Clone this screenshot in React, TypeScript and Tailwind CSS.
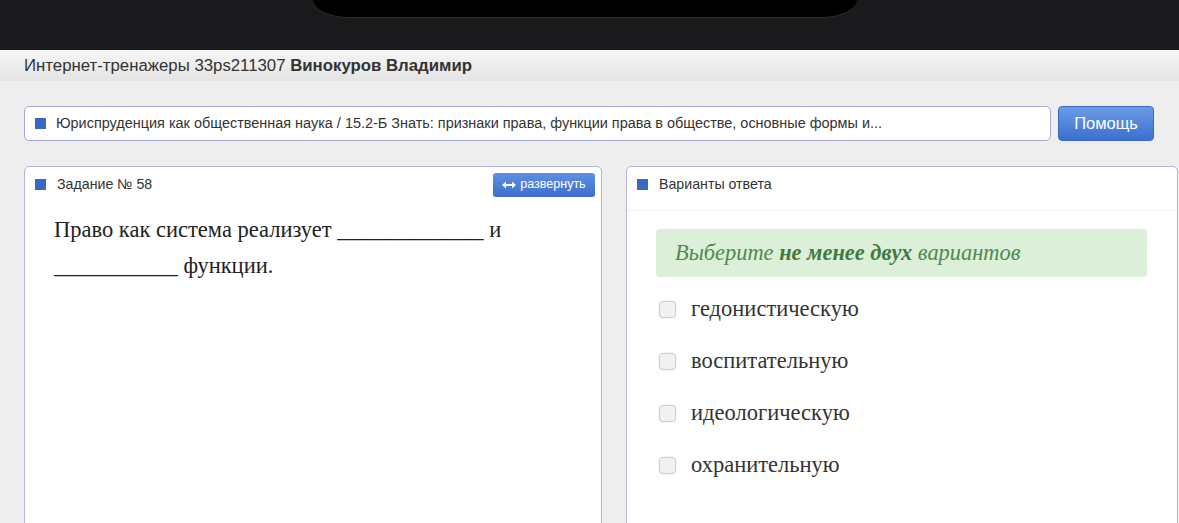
import React from "react";

const sans = { fontFamily: '"Liberation Sans", Arial, sans-serif' };
const serif = { fontFamily: '"Liberation Serif", "Times New Roman", serif' };

function Square() {
  return <span className="inline-block w-[11px] h-[11px] bg-[#3a68c2] shrink-0" />;
}

function Checkbox() {
  return (
    <span className="inline-block w-[17px] h-[17px] rounded-[4px] border border-[#cfcfcf] bg-[#f1f1f1] shadow-[0_0_2px_rgba(0,0,0,0.12)] shrink-0" />
  );
}

const options = ["гедонистическую", "воспитательную", "идеологическую", "охранительную"];

export default function App() {
  return (
    <div className="w-[1179px] h-[523px] overflow-hidden bg-[#eeeeee] text-[#333]" style={sans}>
      {/* top device bar */}
      <div className="h-[50px] bg-[#1a1a1c]">
        <div className="ml-[313px] w-[544px] h-[17px] bg-black rounded-bl-[36px_17px] rounded-br-[36px_17px] shadow-[0_1px_0_#2c2c2e]" />
      </div>

      {/* site header */}
      <div className="h-[31px] bg-gradient-to-b from-[#f6f6f6] to-[#e4e4e4] flex items-center pl-[24px] text-[16.8px] text-[#333]">
        <span>Интернет-тренажеры 33ps211307&nbsp;</span>
        <span className="font-bold">Винокуров Владимир</span>
      </div>

      <div className="pl-[24px] pt-[25px]">
        {/* breadcrumb row */}
        <div className="flex gap-[7px]">
          <div className="w-[1027px] h-[35px] shrink-0 bg-white border border-[#a8a8d2] rounded-[5px] flex items-center gap-[10px] pl-[10px] text-[14.45px] whitespace-nowrap overflow-hidden">
            <Square />
            <span>
              Юриспруденция как общественная наука / 15.2-Б Знать: признаки права, функции права в обществе, основные формы и...
            </span>
          </div>
          <button className="w-[96px] h-[35px] shrink-0 rounded-[4px] bg-gradient-to-b from-[#6b9be6] to-[#3d6fd0] border border-[#3a68c2] text-white text-[16.5px]">
            Помощь
          </button>
        </div>

        {/* panels */}
        <div className="flex gap-[24px] mt-[25px]">
          <div className="w-[578px] h-[400px] shrink-0 bg-white border border-[#b4b4dc] rounded-t-[5px]">
            <div className="flex items-center justify-between h-[32px] pl-[10px] pr-[6px] pt-[3px]">
              <div className="flex items-center gap-[11px] text-[14.2px]">
                <Square />
                <span>Задание № 58</span>
              </div>
              <button className="w-[102px] h-[24px] rounded-[3px] bg-gradient-to-b from-[#5f90e2] to-[#3c6dcf] text-white text-[12.5px] flex items-center justify-center gap-[4px]">
                <svg width="14" height="8" viewBox="0 0 14 8" fill="white">
                  <path d="M0 4 L4 0.5 V3 H10 V0.5 L14 4 L10 7.5 V5 H4 V7.5 Z" />
                </svg>
                <span>развернуть</span>
              </button>
            </div>
            <div className="pl-[29px] pr-[40px] pt-[13px] text-[22.5px] leading-[36px] text-[#222]" style={serif}>
              Право как система реализует _____________ и ___________ функции.
            </div>
          </div>

          <div className="w-[552px] h-[400px] shrink-0 bg-white border border-[#b4b4dc] rounded-t-[5px]">
            <div className="flex items-center gap-[11px] h-[32px] pl-[10px] pt-[3px] text-[14.2px]">
              <Square />
              <span>Варианты ответа</span>
            </div>
            <div className="h-[12px] border-b border-[#f2f2f2]" />
            <div className="pl-[29px] pt-[18px]" style={serif}>
              <div className="w-[491px] h-[48px] rounded-[4px] bg-[#dcefd8] flex items-center pl-[19px] text-[22.4px] italic text-[#4d8a4d]">
                Выберите&nbsp;<span className="font-bold text-[#3f7a3f]">не менее двух</span>&nbsp;вариантов
              </div>
              <div className="flex flex-col pt-[6px]">
                {options.map((o) => (
                  <label key={o} className="flex items-center gap-[15px] h-[52px] pl-[3px] text-[22.5px] text-[#333]">
                    <Checkbox />
                    <span>{o}</span>
                  </label>
                ))}
              </div>
            </div>
          </div>
        </div>
      </div>
    </div>
  );
}
